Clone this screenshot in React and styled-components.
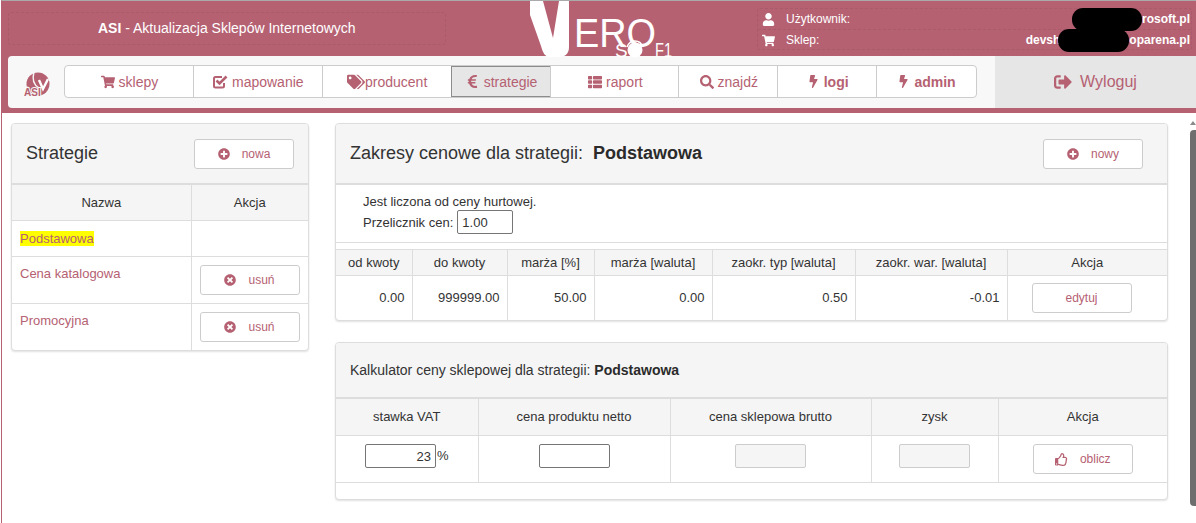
import React from 'react'
import styled, { createGlobalStyle } from 'styled-components'
import {
  FaShoppingCart, FaEuroSign, FaTags, FaThList, FaSearch, FaBolt,
  FaSignOutAlt, FaUser, FaPlusCircle, FaTimesCircle, FaRegThumbsUp,
} from 'react-icons/fa'

const pink = '#b56172'
const dash = '#a95a6b'

const GlobalStyle = createGlobalStyle`
  html, body { margin: 0; padding: 0; background: #fff; overflow: hidden; }
  body { font-family: "Liberation Sans", Arial, sans-serif; font-size: 13px; color: #333; }
`

const Page = styled.div`
  position: relative;
  height: 522px;
  margin-left: 1px;
  border-top: 1px solid #aaa;
  border-left: 1px solid ${pink};
  overflow: hidden;
`

const Header = styled.header`
  height: 112px;
  background: ${pink};
  padding-left: 6px;
`

const TopRow = styled.div`
  display: flex;
  align-items: flex-start;
  height: 55px;
`

const TitleBox = styled.div`
  box-sizing: border-box;
  width: 438px;
  height: 33px;
  margin-top: 11px;
  padding-left: 89px;
  border: 1px dashed ${dash};
  border-radius: 3px;
  color: #fff;
  font-size: 14px;
  line-height: 31px;
`

const LogoSvg = styled.svg`
  flex: none;
  width: 150px;
  height: 56px;
  margin-left: 84px;
  position: relative;
  z-index: 2;
  overflow: visible;
`

const UserBox = styled.div`
  box-sizing: border-box;
  width: 435px;
  height: 42px;
  margin: 7px 4px 0 auto;
  border: 1px dashed ${dash};
  border-radius: 3px;
  color: #fff;
  font-size: 12px;
`

const UserRow = styled.div`
  display: grid;
  grid-template-columns: 24px 1fr auto;
  align-items: center;
  height: 20px;
  padding: 0 1px 0 4px;
  & + & { border-top: 1px dashed ${dash}; }
`

const Value = styled.span`
  font-weight: bold;
  display: flex;
  align-items: center;
`

const Redacted = styled.span`
  display: inline-block;
  width: ${p => p.$w}px;
  height: 23px;
  margin: -3px 0 -3px ${p => p.$left || 0}px;
  background: #000;
  border-radius: 11px;
`

const NavPanel = styled.div`
  display: flex;
  height: 52px;
  background: #f8f8f8;
  border-radius: 4px 0 0 4px;
  align-items: stretch;
  position: relative;
`

const Brand = styled.div`
  flex: none;
  width: 56px;
  display: flex;
  align-items: center;
  justify-content: center;
  padding-left: 4px;
  box-sizing: border-box;
`

const NavGroup = styled.nav`
  display: flex;
  flex: none;
  width: 913px;
  height: 33px;
  margin-top: 9px;
  box-sizing: border-box;
  background: #fff;
  border: 1px solid #ccc;
  border-radius: 4px;
`

const NavItem = styled.a`
  display: flex;
  align-items: center;
  justify-content: center;
  gap: ${p => (p.$tight ? 0 : 4)}px;
  width: ${p => p.$w}px;
  box-sizing: border-box;
  margin-left: -1px;
  color: ${pink};
  font-size: 14px;
  font-weight: ${p => (p.$bold ? 'bold' : 'normal')};
  border-left: 1px solid #ccc;
  &:first-child { border-left: 0; margin-left: 0; }
  ${p => p.$active && `
    background: #e6e6e6;
    box-shadow: inset 0 0 0 1px #8c8c8c;
    border-left: 0;
  `}
`

const Logout = styled.a`
  flex: 1;
  margin-left: 18px;
  display: flex;
  align-items: center;
  justify-content: center;
  gap: 8px;
  background: #e6e6e6;
  color: ${pink};
  font-size: 16px;
`

const Main = styled.main`
  display: grid;
  grid-template-columns: 298px 833px;
  column-gap: 26px;
  align-items: start;
  padding: 10px 0 0 9px;
`

const Column = styled.div`
  display: flex;
  flex-direction: column;
  gap: 21px;
`

const Panel = styled.section`
  box-sizing: border-box;
  background: #fff;
  border: 1px solid #ddd;
  border-radius: 4px;
  box-shadow: 0 1px 2px rgba(0, 0, 0, 0.12);
  overflow: hidden;
`

const PanelHead = styled.div`
  display: flex;
  align-items: center;
  justify-content: space-between;
  box-sizing: border-box;
  height: ${p => p.$h}px;
  padding: 0 ${p => p.$right}px 0 14px;
  background: #f5f5f5;
  border-bottom: 2px solid #ddd;
`

const Heading = styled.h2`
  margin: 0;
  font-size: ${p => p.$size}px;
  font-weight: normal;
  color: #333;
  white-space: pre;
  b { color: #2b2b2b; }
`

const Btn = styled.button`
  display: flex;
  align-items: center;
  justify-content: center;
  gap: 12px;
  box-sizing: border-box;
  width: 100px;
  height: 30px;
  padding: 0;
  background: #fff;
  border: 1px solid #ccc;
  border-radius: 3px;
  color: ${pink};
  font-family: inherit;
  font-size: 12px;
`

const Info = styled.div`
  box-sizing: border-box;
  height: 58px;
  padding: 9px 0 0 27px;
  border-bottom: 1px solid #ddd;
  line-height: 15px;
  color: #333;
`

const RateRow = styled.div`
  display: flex;
  align-items: center;
  gap: 4px;
  margin-top: 1px;
`

const TextInput = styled.input`
  box-sizing: border-box;
  width: ${p => p.$w}px;
  height: 24px;
  padding: 0 4px;
  border: 1px solid #767676;
  border-radius: 2px;
  background: #fff;
  color: #333;
  font-family: inherit;
  font-size: 13px;
  text-align: ${p => p.$align || 'left'};
  &:disabled { background: #f5f5f5; border-color: #ccc; }
`

const Table = styled.table`
  width: 100%;
  table-layout: fixed;
  border-collapse: collapse;
  margin-top: ${p => p.$top || 0}px;
  border-top: ${p => (p.$top ? '1px solid #ddd' : '0')};
`

const Col = styled.col`
  width: ${p => p.$w}px;
`

const Th = styled.th`
  box-sizing: border-box;
  height: ${p => p.$h}px;
  padding: 0;
  background: #f5f5f5;
  border: 1px solid #ddd;
  border-top: 0;
  font-weight: normal;
  color: #333;
  text-align: center;
  &:first-child { border-left: 0; }
  &:last-child { border-right: 0; }
`

const Td = styled.td`
  box-sizing: border-box;
  height: ${p => p.$h}px;
  padding: ${p => p.$pad || '0 7px'};
  border: 1px solid #ddd;
  color: ${p => (p.$link ? pink : '#333')};
  text-align: ${p => p.$align || 'left'};
  vertical-align: ${p => p.$valign || 'middle'};
  &:first-child { border-left: 0; }
  &:last-child { border-right: 0; }
  tr:last-child > & { border-bottom: 0; }
`

const Mark = styled.span`
  display: inline-block;
  background: #ff0;
  line-height: 15px;
  margin-top: -2px;
`

const CalcCell = styled.div`
  display: flex;
  align-items: flex-start;
  justify-content: center;
  gap: 1px;
`

const Percent = styled.span`
  line-height: 24px;
`

const PanelFoot = styled.div`
  height: 16px;
  border-top: 1px solid #ddd;
`

const ScrollTrack = styled.div`
  position: absolute;
  top: 120px;
  right: 0;
  width: 6px;
  bottom: 10px;
  display: flex;
  flex-direction: column;
  align-items: flex-end;
  gap: 5px;
`

const ScrollArrow = styled.div`
  width: 0;
  height: 0;
  border-left: 3px solid transparent;
  border-right: 3px solid transparent;
  border-bottom: 4px solid #8a8a8a;
`

const ScrollThumb = styled.div`
  width: 6px;
  height: 376px;
  background: #6e6e6e;
  border-radius: 4px 0 0 4px;
`

function VeroLogo() {
  return (
    <LogoSvg viewBox="0 0 150 56">
      <path d="M0 0 H13 L23 37 L29 0 H39 V46 C39 53 35 56 28 56 H20 C15 56 13 52 11 45 L0 14 Z" fill="#fff" />
      <text x="44" y="46" fontFamily="Liberation Sans, sans-serif" fontSize="40" textLength="82" lengthAdjust="spacingAndGlyphs" fill="#fff">ERO</text>
      <text x="85" y="56" fontFamily="Liberation Sans, sans-serif" fontSize="19" fill="#fff">S</text>
      <circle cx="105" cy="49" r="7.5" fill="#fff" />
      <path d="M97 46 C99 41 102 40 105 40 C108 40 111 41 113 46" fill="none" stroke="#fff" strokeWidth="1.5" />
      <text x="125" y="56" fontFamily="Liberation Sans, sans-serif" fontSize="20" textLength="17" lengthAdjust="spacingAndGlyphs" fill="#fff">F1</text>
    </LogoSvg>
  )
}

function BrandMark() {
  return (
    <svg width="28" height="30" viewBox="0 0 28 30">
      <circle cx="14" cy="17" r="11.5" fill={pink} />
      <path d="M10 5 C8 12 10 18 15 21" fill="none" stroke="#f8f8f8" strokeWidth="1.4" />
      <path d="M15 13 L19 22 L24 12" fill="none" stroke="#fff" strokeWidth="2.4" />
      <text x="0" y="29" fontFamily="Liberation Sans, sans-serif" fontWeight="bold" fontSize="10" fill={pink} stroke="#f8f8f8" strokeWidth="2" paintOrder="stroke">ASI</text>
    </svg>
  )
}

// glyphicon-check: ramka z wychodzącym ptaszkiem
function CheckIcon() {
  return (
    <svg width="15" height="15" viewBox="0 0 15 15" fill="none" stroke={pink}>
      <path d="M11 9 V12 C11 13 10.5 13.5 9.5 13.5 H2.5 C1.5 13.5 1 13 1 12 V4.5 C1 3.5 1.5 3 2.5 3 H9" strokeWidth="2" />
      <path d="M3.5 6.5 L6.5 9.5 L13.5 2.5" strokeWidth="2.6" />
    </svg>
  )
}

const navItems = [
  { label: 'sklepy', icon: <FaShoppingCart size={14} />, w: 129 },
  { label: 'mapowanie', icon: <CheckIcon />, w: 130 },
  { label: 'producent', icon: <FaTags size={18} />, w: 130, tight: true },
  { label: 'strategie', icon: <FaEuroSign size={15} />, w: 101, active: true },
  { label: 'raport', icon: <FaThList size={14} />, w: 129 },
  { label: 'znajdź', icon: <FaSearch size={14} />, w: 100 },
  { label: 'logi', icon: <FaBolt size={13} />, w: 100, bold: true },
  { label: 'admin', icon: <FaBolt size={13} />, w: 100, bold: true },
]

const rangeCols = [76, 95, 87, 118, 143, 152, 160]
const calcCols = [142, 192, 201, 127, 169]

export default function App() {
  return (
    <Page>
      <GlobalStyle />
      <Header>
        <TopRow>
          <TitleBox><b>ASI</b> - Aktualizacja Sklepów Internetowych</TitleBox>
          <VeroLogo />
          <UserBox>
            <UserRow>
              <FaUser size={13} />
              <span>Użytkownik:</span>
              <Value><Redacted $w={70} />rosoft.pl</Value>
            </UserRow>
            <UserRow>
              <FaShoppingCart size={13} />
              <span>Sklep:</span>
              <Value>devsh<Redacted $w={71} $left={-2} />oparena.pl</Value>
            </UserRow>
          </UserBox>
        </TopRow>
        <NavPanel>
          <Brand><BrandMark /></Brand>
          <NavGroup>
            {navItems.map(item => (
              <NavItem key={item.label} $w={item.w} $active={item.active} $bold={item.bold} $tight={item.tight}>
                {item.icon}{item.label}
              </NavItem>
            ))}
          </NavGroup>
          <Logout><FaSignOutAlt size={18} />Wyloguj</Logout>
        </NavPanel>
      </Header>

      <Main>
        <Column>
          <Panel>
            <PanelHead $h={61} $right={14}>
              <Heading $size={18}>Strategie</Heading>
              <Btn><FaPlusCircle size={12} color={pink} />nowa</Btn>
            </PanelHead>
            <Table>
              <colgroup><Col $w={179} /><Col /></colgroup>
              <thead>
                <tr><Th $h={35}>Nazwa</Th><Th $h={35}>Akcja</Th></tr>
              </thead>
              <tbody>
                <tr>
                  <Td $h={36} $link $pad="0 8px"><Mark>Podstawowa</Mark></Td>
                  <Td $h={36} />
                </tr>
                <tr>
                  <Td $h={47} $link $valign="top" $pad="9px 8px 0">Cena katalogowa</Td>
                  <Td $h={47} $pad="0 8px"><Btn><FaTimesCircle size={12} color={pink} />usuń</Btn></Td>
                </tr>
                <tr>
                  <Td $h={47} $link $valign="top" $pad="9px 8px 0">Promocyjna</Td>
                  <Td $h={47} $pad="0 8px"><Btn><FaTimesCircle size={12} color={pink} />usuń</Btn></Td>
                </tr>
              </tbody>
            </Table>
          </Panel>
        </Column>

        <Column>
          <Panel>
            <PanelHead $h={61} $right={24}>
              <Heading $size={18}>Zakresy cenowe dla strategii:  <b>Podstawowa</b></Heading>
              <Btn><FaPlusCircle size={12} color={pink} />nowy</Btn>
            </PanelHead>
            <Info>
              Jest liczona od ceny hurtowej.
              <RateRow>Przelicznik cen: <TextInput $w={56} defaultValue="1.00" /></RateRow>
            </Info>
            <Table $top={6}>
              <colgroup>{rangeCols.map((w, i) => <Col key={i} $w={w} />)}</colgroup>
              <thead>
                <tr>
                  {['od kwoty', 'do kwoty', 'marża [%]', 'marża [waluta]', 'zaokr. typ [waluta]', 'zaokr. war. [waluta]', 'Akcja'].map(h => (
                    <Th key={h} $h={26}>{h}</Th>
                  ))}
                </tr>
              </thead>
              <tbody>
                <tr>
                  {['0.00', '999999.00', '50.00', '0.00', '0.50', '-0.01'].map((v, i) => (
                    <Td key={i} $h={44} $align="right">{v}</Td>
                  ))}
                  <Td $h={44} $pad="0 0 0 24px"><Btn as="a">edytuj</Btn></Td>
                </tr>
              </tbody>
            </Table>
          </Panel>

          <Panel>
            <PanelHead $h={56} $right={14}>
              <Heading $size={14}>Kalkulator ceny sklepowej dla strategii: <b>Podstawowa</b></Heading>
            </PanelHead>
            <Table>
              <colgroup>{calcCols.map((w, i) => <Col key={i} $w={w} />)}</colgroup>
              <thead>
                <tr>
                  {['stawka VAT', 'cena produktu netto', 'cena sklepowa brutto', 'zysk', 'Akcja'].map(h => (
                    <Th key={h} $h={37}>{h}</Th>
                  ))}
                </tr>
              </thead>
              <tbody>
                <tr>
                  <Td $h={46} $valign="top" $pad="8px 0 0"><CalcCell><TextInput $w={71} $align="right" defaultValue="23" /><Percent>%</Percent></CalcCell></Td>
                  <Td $h={46} $valign="top" $pad="8px 0 0"><CalcCell><TextInput $w={71} /></CalcCell></Td>
                  <Td $h={46} $valign="top" $pad="8px 0 0"><CalcCell><TextInput $w={71} disabled /></CalcCell></Td>
                  <Td $h={46} $valign="top" $pad="8px 0 0"><CalcCell><TextInput $w={71} disabled /></CalcCell></Td>
                  <Td $h={46} $valign="top" $pad="8px 0 0"><CalcCell><Btn><FaRegThumbsUp size={13} color={pink} />oblicz</Btn></CalcCell></Td>
                </tr>
              </tbody>
            </Table>
            <PanelFoot />
          </Panel>
        </Column>
      </Main>

      <ScrollTrack>
        <ScrollArrow />
        <ScrollThumb />
      </ScrollTrack>
    </Page>
  )
}
